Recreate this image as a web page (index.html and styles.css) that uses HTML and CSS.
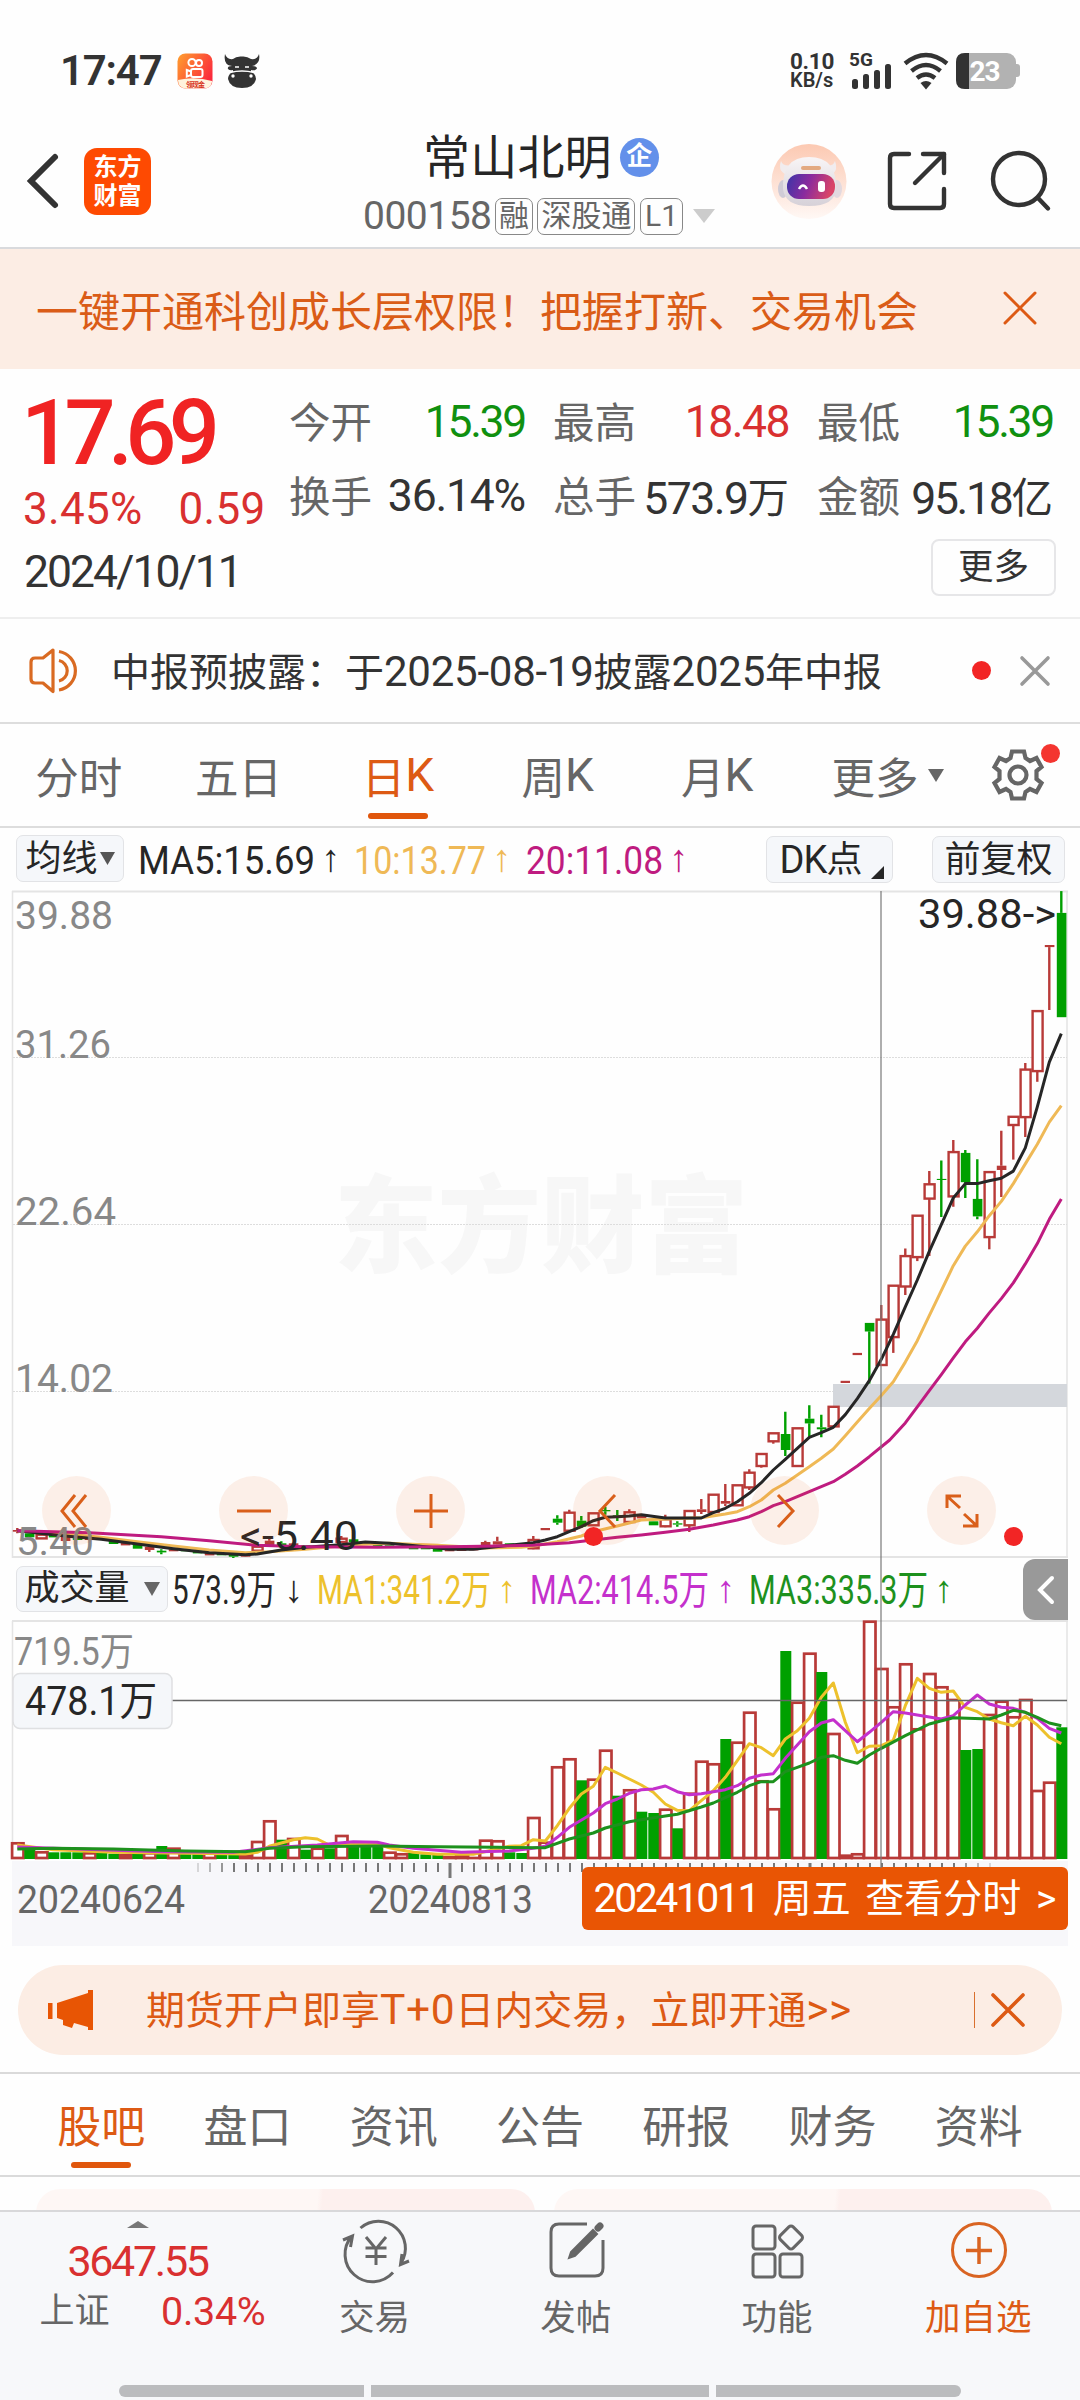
FILE: index.html
```html
<!DOCTYPE html>
<html lang="zh-CN">
<head>
<meta charset="utf-8">
<title>常山北明 000158</title>
<link rel="stylesheet" href="styles.css">
</head>
<body>
<div class="app">
  <div class="status">
    <span class="time">17:47</span>
    <svg class="app-badge" width="36" height="36" viewBox="0 0 36 36">
      <defs><linearGradient id="ks" x1="0" y1="0" x2="1" y2="0.6"><stop offset="0" stop-color="#ffa02e"/><stop offset="1" stop-color="#fb2a3c"/></linearGradient></defs>
      <rect x="0.5" y="0.5" width="35" height="35" rx="8" fill="url(#ks)"/>
      <path d="M1 27 Q18 23 35 28 V29 Q34 35.500 27 35.500 H9 Q1 35 1 27Z" fill="#fff3dd"/>
      <g fill="none" stroke="#fff" stroke-width="2"><circle cx="15" cy="9.500" r="3.600"/><circle cx="22" cy="10" r="3"/><rect x="14" y="16" width="11.500" height="8" rx="2"/><path d="M14 18.500 L9.800 17 V23.500 L14 22"/></g>
      <text x="9" y="34" font-size="7" font-weight="700" fill="#d8321c" textLength="19">领现金</text>
    </svg>
    <svg class="bull" width="36" height="36" viewBox="0 0 36 36" fill="#333">
      <path d="M1 1 Q-1 12 8 13 Q3 13 4 16 Q6 18 9 17 L9 20 H27 L27 17 Q31 18 33 15.500 Q33 13 28 13 Q37 11 35 1 Q33 7 27 6 Q23 3 18 3.500 Q12 3 9 6 Q3 7 1 1Z"/>
      <path d="M8 19 Q4 22 4 26 Q6 35 18 35 Q30 35 32 26 Q32 22 28 19Z"/>
      <path d="M6 19.500 Q18 16.500 30 19.500" fill="none" stroke="#fff" stroke-width="1.500"/><path d="M11 14 H15 M21 14 H25" stroke="#fff" stroke-width="1.500"/>
      <circle cx="9" cy="23" r="1.700" fill="#fff"/><circle cx="27" cy="23" r="1.700" fill="#fff"/>
    </svg>
    <span class="net"><b>0.10</b><b class="unit">KB/s</b></span>
    <svg class="signal" width="46" height="40" viewBox="0 0 46 40">
      <text x="0" y="15" font-size="19" font-weight="700" fill="#333" textLength="24">5G</text>
      <g fill="#333"><rect x="3" y="28" width="6" height="10" rx="2.500"/><rect x="14" y="23" width="6" height="15" rx="2.500"/><rect x="25" y="19" width="6" height="19" rx="2.500"/><rect x="36" y="13" width="6" height="25" rx="2.500"/></g>
    </svg>
    <svg class="wifi" width="46" height="38" viewBox="0 0 46 38" fill="none" stroke="#333" stroke-width="4.400">
      <path d="M2 11.500 Q23 -5.500 44 11.500"/><path d="M8.500 19 Q23 7 37.500 19"/><path d="M14 26 Q23 19 32 26"/><path d="M17.500 31 Q23 27 28.500 31 L23 37.500Z" fill="#333" stroke="none"/>
    </svg>
    <svg class="battery" width="64" height="38" viewBox="0 0 64 38">
      <rect x="0" y="1" width="60" height="36" rx="9" fill="#b2b2b2"/><path d="M60 12 h1 q3 0 3 3 v7 q0 3 -3 3 h-1Z" fill="#b2b2b2"/>
      <path d="M13 1 H9 Q0 1 0 10 V28 Q0 37 9 37 H13Z" fill="#333"/>
      <text x="13.500" y="29" font-size="28" font-weight="700" fill="#fff" textLength="31">23</text>
    </svg>
  </div>

  <header class="header">
    <svg class="back" width="36" height="60" viewBox="0 0 36 60" fill="none" stroke="#333" stroke-width="6" stroke-linecap="round" stroke-linejoin="miter"><path d="M29 6 L5 30 L29 54"/></svg>
    <div class="brand"><span>东方</span><span>财富</span></div>
    <div class="title">
      <div class="name">常山北明<span class="corp">企</span></div>
      <div class="code"><span>000158</span><i>融</i><i>深股通</i><i>L1</i><svg width="22" height="16" viewBox="0 0 22 16"><path d="M0 1 H22 L11 15Z" fill="#ccc"/></svg></div>
    </div>
    <svg class="robot" width="76" height="78" viewBox="0 0 76 78">
      <defs>
        <linearGradient id="halo" x1="0" y1="0" x2="0" y2="1"><stop offset="0" stop-color="#fcc9b2"/><stop offset="1" stop-color="#fff8f5"/></linearGradient>
        <linearGradient id="shell" x1="0" y1="0" x2="0" y2="1"><stop offset="0" stop-color="#f8f5f6"/><stop offset="1" stop-color="#d6d1d8"/></linearGradient>
        <linearGradient id="visor" x1="0" y1="0" x2="1" y2="0.2"><stop offset="0" stop-color="#3a35a8"/><stop offset="0.5" stop-color="#8a2a9e"/><stop offset="1" stop-color="#d94468"/></linearGradient>
      </defs>
      <circle cx="38" cy="38.500" r="37.500" fill="url(#halo)"/>
      <path d="M10 18 Q6 30 18 32 L22 22 Q12 24 10 18Z M64 18 Q68 30 58 32 L54 22 Q62 24 64 18Z" fill="#f1ecee"/>
      <ellipse cx="12" cy="46" rx="5" ry="9" fill="#cfcbd6"/><ellipse cx="66" cy="46" rx="5" ry="9" fill="#e2d9df"/>
      <path d="M12 46 Q11 14 38 14 Q66 14 65 46 Q64 63 38 63 Q14 63 12 46Z" fill="url(#shell)"/>
      <rect x="30" y="23" width="20" height="4" rx="2" fill="#e3a980"/>
      <rect x="16" y="31" width="48" height="25" rx="12" fill="url(#visor)"/>
      <path d="M28 46 Q32 39 36 46" fill="none" stroke="#fff" stroke-width="2.500"/><rect x="47" y="38" width="7" height="11" rx="3" fill="#fff"/>
    </svg>
    <svg class="share" width="62" height="62" viewBox="0 0 62 62" fill="none" stroke="#333" stroke-width="4.400" stroke-linecap="round" stroke-linejoin="round"><path d="M23 4 H8 Q4 4 4 8 V54 Q4 58 8 58 H54 Q58 58 58 54 V39"/><path d="M37 4 H58 V23"/><path d="M58 4 L29 33"/></svg>
    <svg class="search" width="62" height="64" viewBox="0 0 62 64" fill="none" stroke="#333" stroke-width="4.400" stroke-linecap="round"><circle cx="29" cy="29" r="26"/><path d="M48 48 L58 58.500"/></svg>
  </header>

  <div class="promo">
    <span>一键开通科创成长层权限！把握打新、交易机会</span>
    <svg width="34" height="34" viewBox="0 0 34 34" stroke="#dd5a14" stroke-width="3" stroke-linecap="round"><path d="M2 2 L32 32 M32 2 L2 32"/></svg>
  </div>

  <section class="quote">
    <div class="last">
      <div class="price">17.69</div>
      <div class="change"><span>3.45%</span><span>0.59</span></div>
      <div class="date">2024/10/11</div>
    </div>
    <div class="stats">
      <div class="stat"><span>今开</span><b class="down">15.39</b></div>
      <div class="stat"><span>最高</span><b class="up">18.48</b></div>
      <div class="stat"><span>最低</span><b class="down">15.39</b></div>
      <div class="stat"><span>换手</span><b class="pct">36.14%</b></div>
      <div class="stat"><span>总手</span><b>573.9<em>万</em></b></div>
      <div class="stat"><span>金额</span><b class="tight">95.18<em>亿</em></b></div>
      <button class="more">更多</button>
    </div>
  </section>

  <div class="notice">
    <svg class="horn" width="52" height="46" viewBox="0 0 52 46" fill="none" stroke="#d96a22" stroke-width="3.200"><path d="M24 2 L14 10 H6 Q2 10 2 14 V31 Q2 35 6 35 H14 L24 43.500Z" stroke-linejoin="round"/><path d="M30 12.500 A10.500 10.500 0 0 1 30 33"/><path d="M30 3.500 A19.500 19.500 0 0 1 30 42"/></svg>
    <p>中报预披露：于<span>2025-08-19</span>披露<span>2025</span>年中报</p>
    <i class="dot"></i>
    <svg class="x" width="32" height="32" viewBox="0 0 32 32" stroke="#999" stroke-width="3.600" stroke-linecap="round"><path d="M3 3 L29 29 M29 3 L3 29"/></svg>
  </div>

  <nav class="periods">
    <span>分时</span><span>五日</span><span class="on">日<em>K</em></span><span>周<em>K</em></span><span>月<em>K</em></span>
    <span>更多<svg width="16" height="13" viewBox="0 0 16 13"><path d="M0 0 H16 L8 13Z" fill="#666"/></svg></span>
    <span class="gear"><svg width="54" height="54" viewBox="-27 -27 54 54" fill="none" stroke="#666" stroke-width="4.200"><path d="M-6 -23.500 H6 L7.500 -17 L12 -14 L18.500 -17 L23.500 -8 L18.500 -4 V4 L23.500 8 L18.500 17 L12 14 L7.500 17 L6 23.500 H-6 L-7.500 17 L-12 14 L-18.500 17 L-23.500 8 L-18.500 4 V-4 L-23.500 -8 L-18.500 -17 L-12 -14 L-7.500 -17Z"/><circle r="8.500"/></svg><i class="dot"></i></span>
  </nav>

  <section class="chart">
    <div class="ma-row">
      <button class="chip ma">均线<svg width="15" height="13" viewBox="0 0 15 13"><path d="M0 0 H15 L7.500 13Z" fill="#555"/></svg></button>
      <svg class="legend" width="570" height="62">
        <g font-size="38.500"><text x="3" y="46" textLength="177" lengthAdjust="spacingAndGlyphs" fill="#262626">MA5:15.69</text><text class="arrow" x="186" y="43" fill="#262626">↑</text>
        <text x="219" y="46" textLength="132" lengthAdjust="spacingAndGlyphs" fill="#efb956">10:13.77</text><text class="arrow" x="357" y="43" fill="#efb956">↑</text>
        <text x="391" y="46" textLength="137" lengthAdjust="spacingAndGlyphs" fill="#bf1b80">20:11.08</text><text class="arrow" x="534" y="43" fill="#bf1b80">↑</text></g>
      </svg>
      <button class="chip dk"><em>DK</em>点<svg width="13" height="13" viewBox="0 0 13 13"><path d="M13 0 V13 H0Z" fill="#262626"/></svg></button>
      <button class="chip adj">前复权</button>
    </div>

    <div class="price-panel">
      <svg id="price" width="1080" height="669" viewBox="0 0 1080 669"></svg>
      <button class="round r1"><svg width="30" height="34" viewBox="0 0 30 34"><path d="M16 1 L3 17 L16 33 M27 1 L14 17 L27 33"/></svg></button>
      <button class="round r2"><svg width="34" height="34" viewBox="0 0 34 34"><path d="M0 17 H34"/></svg></button>
      <button class="round r3"><svg width="34" height="34" viewBox="0 0 34 34"><path d="M0 17 H34 M17 0 V34"/></svg></button>
      <button class="round r4"><svg width="20" height="34" viewBox="0 0 20 34"><path d="M17 1 L2 17 L17 33"/></svg></button>
      <button class="round r5"><svg width="20" height="34" viewBox="0 0 20 34"><path d="M3 1 L18 17 L3 33"/></svg></button>
      <button class="round r6"><svg width="34" height="34" viewBox="0 0 34 34"><path d="M2 14 V2 H16 M3 3 L15 14 M32 20 V32 H18 M31 31 L19 20"/></svg></button>
      <i class="dot d1"></i><i class="dot d2"></i>
    </div>

    <div class="vol-row">
      <button class="chip vol">成交量<svg width="16" height="14" viewBox="0 0 16 14"><path d="M0 0 H16 L8 14Z" fill="#666"/></svg></button>
      <svg class="legend" width="850" height="60">
        <g font-size="40"><text x="4" y="45" textLength="104" lengthAdjust="spacingAndGlyphs" fill="#262626">573.9万</text><text class="arrow" x="116" y="43" fill="#262626">↓</text>
        <text x="149" y="45" textLength="174" lengthAdjust="spacingAndGlyphs" fill="#edc12c">MA1:341.2万</text><text class="arrow" x="329" y="43" fill="#edc12c">↑</text>
        <text x="362" y="45" textLength="179" lengthAdjust="spacingAndGlyphs" fill="#c430cc">MA2:414.5万</text><text class="arrow" x="548" y="43" fill="#c430cc">↑</text>
        <text x="581" y="45" textLength="179" lengthAdjust="spacingAndGlyphs" fill="#1d911d">MA3:335.3万</text><text class="arrow" x="766" y="43" fill="#1d911d">↑</text></g>
      </svg>
      <button class="fold"><svg width="18" height="30" viewBox="0 0 18 30" fill="none" stroke="#fff" stroke-width="4" stroke-linecap="round"><path d="M15 3 L3 15 L15 27"/></svg></button>
    </div>

    <svg id="volume" width="1080" height="240" viewBox="0 0 1080 240"></svg>
    <div class="axis">
      <svg id="ticks" width="1056" height="20" viewBox="12 0 1056 20"></svg>
      <svg class="dates" width="560" height="50"><g font-size="39" fill="#666"><text x="5" y="31" textLength="168" lengthAdjust="spacingAndGlyphs">20240624</text><text x="356" y="31" textLength="165" lengthAdjust="spacingAndGlyphs">20240813</text></g></svg>
      <button class="goto"><b>20241011</b> 周五 查看分时 &gt;</button>
    </div>
    <div class="crosshair"></div>
  </section>

  <div class="ad">
    <svg class="mega" width="48" height="42" viewBox="0 0 48 42" fill="#e85504"><rect x="1" y="14" width="4.500" height="16"/><path d="M10 14 L41 4 V1 H46 V41 H41 V38 L27 34 L25 39 L16 36 V31 L10 29Z"/></svg>
    <span>期货开户即享<em>T+0</em>日内交易，立即开通<em>&gt;&gt;</em></span>
    <i></i>
    <svg class="x" width="34" height="34" viewBox="0 0 34 34" stroke="#dd5a14" stroke-width="3.600" stroke-linecap="round"><path d="M2 2 L32 32 M32 2 L2 32"/></svg>
  </div>

  <nav class="sections"><span class="on">股吧</span><span>盘口</span><span>资讯</span><span>公告</span><span>研报</span><span>财务</span><span>资料</span></nav>
  <div class="cards"><div></div><div></div></div>

  <footer class="dock">
    <div class="index">
      <svg width="22" height="7" viewBox="0 0 22 7"><path d="M0 7 L11 0 L22 7Z" fill="#777"/></svg>
      <div class="pts">3647.55</div>
      <div class="row"><span>上证</span><b>0.34%</b></div>
    </div>
    <div class="item"><svg width="68" height="60" viewBox="-34 -30 68 60" fill="none" stroke="#666" stroke-width="3"><path d="M-15.500 -22 A27 27 0 0 1 25 13 M33 11 L24.500 14.500 L26 4"/><path d="M17 22.500 A27 27 0 0 1 -24 -14 M-33 -10 L-23.500 -14 L-25.500 -3"/><path d="M-10 -13 L0 -1 L10 -13 M-10.500 -2 H10.500 M-10.500 6.500 H10.500 M0 -1 V15"/></svg><span>交易</span></div>
    <div class="item"><svg width="56" height="60" viewBox="0 0 56 60" fill="none" stroke="#666" stroke-width="3"><path d="M38 4 H10 Q2 4 2 12 V48 Q2 56 10 56 H46 Q54 56 54 48 V20"/><path d="M20 38 L22 32 L44 10 L48 14 L26 36Z" fill="#666" stroke-width="2"/><path d="M49 8 L51 6" stroke-width="7" stroke-linecap="round"/></svg><span>发帖</span></div>
    <div class="item"><svg width="56" height="60" viewBox="0 0 56 60" fill="none" stroke="#666" stroke-width="3"><rect x="3" y="6" width="22" height="23" rx="3"/><rect x="3" y="34" width="22" height="23" rx="3"/><rect x="30" y="34" width="22" height="23" rx="3"/><rect x="32" y="8.500" width="18" height="18" rx="3" transform="rotate(45 41 17.500)"/></svg><span>功能</span></div>
    <div class="item on"><svg width="60" height="60" viewBox="-30 -30 60 60" fill="none" stroke="#d96422" stroke-width="3"><circle r="26.500"/><path d="M-13 0.500 H13 M0 -13 V14" stroke-width="3.500"/></svg><span>加自选</span></div>
  </footer>
  <div class="gesture"><i></i><i></i><i></i></div>
</div>
<script src="chart.js"></script>
</body>
</html>
```
FILE: chart.js
```js
// Horizontal position of the trading day with index i.
const X = i => 17.3 + 12 * i;
const RED = '#b83a38', GREEN = '#00a000';
const r1 = n => Math.round(n * 10) / 10;

// Vertical scales: the flat early stretch, the middle stretch, the steep late stretch.
const early = v => v / 3 + 550;
const middle = v => v / 3 + 260;
const late = v => v / 2.8 - 10;

// [index, kind, bodyTop, bodyBottom, high, low]; h hollow, s solid rise, g fall, d dash.
const candles = [
  [early, [
    [0,'s',270,275,264,280],[1,'g',280,292],[2,'h',284,295],[3,'g',284,292],[4,'s',288,303],[5,'g',288,300],[6,'s',290,300],[7,'g',294,300],
    [8,'g',300,312],[9,'s',308,316],[10,'g',312,326],[11,'s',320,330,318,336],[12,'g',332,337,328,343],[13,'s',328,334],[14,'g',328,334],
    [15,'g',332,340],[16,'s',338,346],[17,'g',340,346],[18,'g',345,350,340,354],[19,'s',344,350],[20,'h',320,332],[21,'s',302,318,292,320],
    [22,'g',310,318,304,320],[23,'s',310,320],[24,'g',316,322],[25,'g',318,322],[26,'s',312,318],[27,'h',296,306,288,308],[28,'g',298,306,294,308],
    [29,'g',306,312],[30,'g',313,319],[31,'g',316,320],[32,'s',318,322],[33,'g',322,328],[34,'g',322,328],[35,'g',326,335],[36,'s',330,334],
    [37,'s',330,333],[38,'s',326,331],[39,'s',306,316,302,318],[40,'s',304,314,290,318],[41,'g',310,315],[42,'s',312,316],[43,'h',300,325,288,328]]],
  [middle, [
    [44,'d',1137],[45,'g',1106,1118,1096,1124],[46,'h',1088,1142,1079,1144],[47,'g',1112,1130,1098,1134],[48,'h',1090,1126],[49,'g',1080,1084,1070,1094],
    [50,'g',1096,1102,1080,1113],[51,'h',1087,1116,1078,1118],[52,'s',1097,1105],[53,'g',1114,1126],[54,'h',1108,1129,1094,1132],[55,'g',1120,1124,1114,1130],
    [56,'h',1083,1126,1083,1146],[57,'s',1078,1086,1047,1092],[58,'h',1034,1086],[59,'s',1053,1061,1002,1068],[60,'h',1006,1066],[61,'h',968,1012,958,1020],
    [62,'h',912,948,912,953],[63,'h',850,874,850,881],[64,'g',852,900,785,918],[65,'h',835,948],[66,'g',806,820,766,860],[67,'g',832,838,794,862]]],
  [late, [
    [68,'h',1475,1530],[69,'d',1405],[70,'d',1327],[71,'g',1240,1264,1240,1410],[72,'h',1231,1358,1190,1360],[73,'h',1136,1280,1136,1324],
    [74,'h',1053,1138,1032,1162],[75,'h',940,1056,940,1067],[76,'h',852,892,815,1053],[77,'g',837,840,785,944],[78,'h',762,886,728,915],
    [79,'g',764,846,756,890],[80,'g',893,942,782,950],[81,'h',818,1000,818,1034],[82,'s',800,812,702,888],[83,'h',663,686,663,783],
    [84,'h',531,664,512,720],[85,'h',367,535,367,565],[86,'s',182,188,182,364],[87,'g',92,384,31,384]]]
];

const averages = {
  '#efb956': [
    [early, [[0,272],[4,282],[7,292],[10,305],[13,318],[16,330],[19,338],[21,335],[24,328],[28,314],[31,310],[35,316],[39,324],[42,322]]],
    [middle, [[43,1188],[45,1175],[47,1158],[48,1145],[50,1128],[52,1110],[54,1107],[57,1103],[59,1092],[60,1085],[61,1070],[62,1050],[63,1020],[64,1000],[65,975],[66,950],[67,925],[68,897]]],
    [late, [[69,1556],[70,1518],[71,1480],[72,1443],[73,1405],[74,1350],[75,1290],[76,1220],[77,1150],[78,1080],[79,1025],[80,985],[81,940],[82,900],[83,850],[84,795],[85,740],[86,678],[87,632]]]],
  '#262626': [
    [early, [[0,272],[4,288],[7,298],[10,312],[13,326],[16,338],[19,344],[20,342],[22,330],[24,322],[27,314],[29,306],[31,310],[34,320],[36,328],[38,328],[41,316],[43,308]]],
    [middle, [[44,1170],[45,1160],[46,1145],[47,1130],[48,1112],[49,1102],[50,1100],[51,1098],[52,1094],[54,1104],[57,1104],[58,1088],[59,1075],[60,1055],[61,1030],[62,998],[63,960],[64,928],[65,895],[66,862],[67,848],[68,832]]],
    [late, [[69,1497],[70,1452],[71,1402],[72,1342],[73,1272],[74,1195],[75,1120],[76,1040],[77,965],[78,890],[79,850],[80,850],[81,842],[82,835],[83,815],[84,750],[85,635],[86,510],[87,430]]]],
  '#bf1b80': [
    [early, [[0,272],[6,278],[12,290],[16,302],[20,316],[24,320],[30,322],[36,320],[40,318],[43,316]]],
    [middle, [[44,1183],[46,1178],[48,1170],[50,1162],[52,1155],[54,1147],[56,1138],[58,1125],[60,1110],[61,1100],[62,1085],[63,1067],[64,1055],[65,1040],[66,1025],[67,1010],[68,995],[69,973],[70,948],[71,920]]],
    [late, [[72.7,1568],[74,1520],[75,1475],[76,1430],[77,1385],[78,1338],[79,1293],[80,1255],[81,1212],[82,1172],[83,1128],[84,1075],[85,1018],[86,950],[87,893]]]]
};

const line = (pts, color, w) => `<polyline fill="none" stroke="${color}" stroke-width="${w}" stroke-linejoin="round" points="${pts.map(p => r1(p[0]) + ',' + r1(p[1])).join(' ')}"/>`;
const label = (x, y, w, t, c, s) => `<text x="${x}" y="${y}" textLength="${w}" lengthAdjust="spacingAndGlyphs" font-size="${s}" fill="${c}">${t}</text>`;

let p = '<text class="mark" x="334" y="374" textLength="414" lengthAdjust="spacingAndGlyphs">东方财富</text>';
p += '<path d="M12 1.500 H1068 M12 667 H1068" stroke="#e4e4e4" stroke-width="2"/><path d="M12.500 1 V668 M1067 1 V668" stroke="#e4e4e4" stroke-width="1.500"/>';
p += '<path d="M13 167.500 H1067 M13 334.500 H1067 M13 501.500 H1067" stroke="#ddd" stroke-width="1" stroke-dasharray="2 1"/>';
p += '<rect x="833" y="494" width="234" height="23" fill="#d4d7dc"/>';
for (const [y, list] of candles) for (const [i, kind, a, b, hi, lo] of list) {
  const x = X(i), c = kind === 'g' ? GREEN : RED;
  if (kind === 'd') { p += `<rect x="${r1(x - 4.7)}" y="${r1(y(a) - 1)}" width="9.400" height="2.200" fill="${c}"/>`; continue; }
  const t = y(a), m = Math.max(y(b), t + 1);
  if (hi !== undefined) p += `<path d="M${r1(x)} ${r1(y(hi))} V${r1(t)} M${r1(x)} ${r1(m)} V${r1(y(lo))}" stroke="${c}" stroke-width="2.400"/>`;
  if (kind === 'h') p += `<rect x="${r1(x - 4.7)}" y="${r1(t)}" width="10" height="${r1(m - t)}" fill="#fff" stroke="${c}" stroke-width="2.400"/>`;
  else p += `<rect x="${r1(x - 4.5)}" y="${r1(t)}" width="9.600" height="${r1(m - t)}" fill="${c}"/>`;
}
for (const [c, parts] of Object.entries(averages)) p += line(parts.flatMap(([y, pts]) => pts.map(([i, v]) => [X(i), y(v)])), c, 3);
p += label(15, 39, 98, '39.88', '#888', 39) + label(15, 168, 96, '31.26', '#888', 39) + label(15, 335, 101, '22.64', '#888', 39) + label(15, 502, 98, '14.02', '#888', 39) + label(16, 665, 78, '5.40', '#888', 39);
p += label(240, 660, 118, '&lt;-5.40', '#262626', 40) + label(918, 38, 138, '39.88-&gt;', '#262626', 40);
document.getElementById('price').innerHTML = p;

// Volume bars: r rise (hollow), g fall (filled), then the bar's top.
const volume = 'r1210 g1230 r1237 g1240 g1240 g1240 r1240 g1242 g1244 r1246 g1243 r1240 g1221 r1226 g1243 g1243 r1240 g1245 g1245 r1247 r1206 r1144 g1202 r1197 g1232 r1226 g1228 r1188 g1215 g1220 g1222 r1238 r1243 g1242 g1246 g1248 r1252 r1248 r1237 r1202 r1204 g1240 g1242 r1134 r1208 r982 r958 g1024 r1019 r932 g1070 r1051 g1118 g1122 r1109 g1168 r1061 r965 r973 g900 r908 r818 r1024 r1108 g636 r788 r641 g699 r882 r1247 r1243 r545 r687 r802 r673 r868 r702 r742 r780 g933 g930 r825 r785 r832 r780 r1053 r1028 g865'.split(' ');
const V = v => v / 3 - 181;
let q = '<path d="M12 1 H1068" stroke="#e4e4e4" stroke-width="2"/><path d="M12.500 1 V239 M1067 1 V239" stroke="#e4e4e4" stroke-width="1.500"/>';
volume.forEach((s, i) => {
  const t = V(+s.slice(1)), x = X(i);
  if (s[0] === 'g') q += `<rect x="${r1(x - 5)}" y="${r1(t)}" width="11" height="${r1(239 - t)}" fill="${GREEN}"/>`;
  else q += `<rect x="${r1(x - 5.2)}" y="${r1(t + 1)}" width="11.400" height="${r1(237 - t)}" fill="#fff" stroke="${RED}" stroke-width="2.700"/>`;
});
const volumeAverages = {
  '#edc12c': [[0,1218],[3,1232],[8,1240],[14,1243],[19,1245],[20,1240],[21,1222],[23,1202],[24,1196],[25,1200],[26,1218],[28,1216],[30,1215],[31,1226],[33,1240],[35,1246],[38,1246],[40,1230],[41,1222],[42,1220],[43,1202],[44,1206],[45,1160],[46,1108],[47,1065],[48,1042],[49,985],[50,1002],[51,1020],[52,1038],[53,1060],[54,1095],[55,1114],[56,1115],[57,1085],[58,1055],[59,1015],[60,965],[61,914],[62,926],[63,950],[64,900],[65,875],[66,838],[67,775],[68,732],[69,850],[70,941],[71,922],[72,920],[73,903],[74,800],[75,718],[76,748],[77,760],[78,756],[79,805],[80,818],[81,840],[82,851],[83,860],[84,832],[85,858],[86,895],[87,914]],
  '#c430cc': [[0,1224],[5,1230],[12,1238],[18,1240],[21,1226],[25,1218],[28,1208],[30,1210],[31,1218],[33,1228],[37,1240],[41,1236],[43,1228],[44,1222],[45,1195],[46,1165],[48,1122],[49,1094],[50,1080],[51,1063],[52,1052],[53,1050],[54,1041],[55,1058],[56,1067],[57,1064],[59,1052],[60,1040],[61,1018],[62,1008],[63,1004],[64,958],[66,878],[67,852],[68,842],[69,875],[70,908],[71,880],[72,850],[73,818],[74,822],[76,834],[77,840],[78,830],[79,798],[80,768],[81,795],[82,805],[83,808],[84,820],[85,838],[86,868],[87,882]],
  '#1d911d': [[0,1230],[3,1228],[8,1230],[14,1236],[19,1238],[21,1228],[24,1223],[30,1221],[35,1223],[40,1225],[44,1226],[46,1200],[48,1182],[49,1167],[51,1148],[52,1142],[54,1131],[55,1126],[57,1104],[58,1092],[59,1076],[60,1060],[61,1040],[62,1028],[63,1028],[64,998],[65,985],[66,972],[67,955],[68,950],[69,964],[70,973],[71,948],[72,928],[74,890],[76,855],[78,836],[81,840],[82,828],[83,814],[84,820],[85,835],[86,852],[87,860]]
};
for (const [c, pts] of Object.entries(volumeAverages)) q += line(pts.map(([i, v]) => [X(i), V(v)]), c, 3);
q += '<path d="M172 80.500 H1067" stroke="#666" stroke-width="1.300"/>';
q += label(14, 45, 120, '719.5万', '#888', 39);
q += '<rect x="13" y="53.500" width="159" height="55" rx="7" fill="#f5f7fa" stroke="#dfe0e2" stroke-width="1.500"/>' + label(25, 95, 132, '478.1万', '#262626', 40);
document.getElementById('volume').innerHTML = q;

let k = '';
for (let i = 15; i <= 81; i++) {
  const big = i === 36, o = Math.min(1, (i - 14) / 4, (82 - i) / 4);
  k += `<path d="M${r1(X(i) + 0.7)} ${2} V${big ? 17 : 11}" stroke="#777" stroke-width="${big || i === 66 ? 3 : 2}" opacity="${o}"/>`;
}
document.getElementById('ticks').innerHTML = k;
```
FILE: styles.css
```css
* { box-sizing: border-box; }
body { margin: 0; background: #fefefe; font-family: Roboto, "Noto Sans CJK SC", sans-serif; color: #333; }
svg { display: block; flex: none; overflow: visible; }
svg text { font-family: Roboto, "Noto Sans CJK SC", sans-serif; }
svg text.arrow { font-family: "Liberation Sans", sans-serif; font-size: 38px; }
svg text.mark { font-size: 106px; font-weight: 900; fill: #f7f7f7; font-family: "Noto Sans CJK SC", sans-serif; }
b, em, i { font-style: normal; font-weight: 400; }
button { border: 0; padding: 0; font: inherit; color: inherit; background: none; }
.app { width: 1080px; height: 2400px; overflow: hidden; display: flex; flex-direction: column; }
.app > * { flex: none; }
.dot { display: block; width: 19px; height: 19px; border-radius: 50%; background: #f22525; }

.status { height: 124px; padding: 17px 60px 0 60px; display: flex; align-items: center; }
.time { font-size: 42px; font-weight: 600; letter-spacing: -1.2px; width: 117px; white-space: nowrap; }
.bull { margin-left: 11px; }
.net { margin-left: auto; width: 59px; display: flex; flex-direction: column; line-height: 19px; }
.net b { font-size: 22.500px; font-weight: 700; letter-spacing: -0.300px; }
.net .unit { font-size: 20px; font-weight: 600; letter-spacing: 0; }
.wifi { margin-left: 8px; }
.battery { margin-left: 7px; }

.header { height: 125px; border-bottom: 2px solid #d9dadd; padding: 0 28px 0 26px; display: flex; position: relative; }
.back { margin-top: 27px; }
.brand { margin: 24px 0 0 22px; width: 67px; height: 67px; border-radius: 13px; background: #fe4a02; color: #fff; display: flex; flex-direction: column; justify-content: center; align-items: center; font-size: 24px; line-height: 29px; }
.brand span { font-weight: 700; }
.title { margin-left: 212px; width: 352px; }
.name { margin-left: 60px; height: 66px; display: flex; align-items: center; font-size: 47px; line-height: 66px; color: #262626; letter-spacing: 0.200px; padding-top: 1px; }
.corp { width: 39px; height: 39px; border-radius: 50%; background: #6390ea; color: #fff; font-size: 26px; line-height: 37px; text-align: center; font-weight: 700; margin-left: 8px; letter-spacing: 0; }
.code { height: 50px; display: flex; align-items: center; font-size: 39px; color: #666; line-height: 50px; padding-top: 2px; }
.code span { letter-spacing: -0.500px; width: 133px; }
.code i { height: 37px; line-height: 34px; border: 1.500px solid #888; border-radius: 7px; font-size: 30px; padding: 0 3px; margin-right: 4.500px; white-space: nowrap; }
.code i:nth-child(4) { padding: 0 4px; margin-right: 3px; }
.code svg { margin-left: 7px; }
.robot { margin: 19px 0 0 56px; }
.share { margin: 26px 0 0 39px; }
.search { margin: 26px 0 0 42px; }

.promo { height: 120px; background: #fcede4; color: #da5c17; padding: 0 43px 0 36px; display: flex; align-items: center; justify-content: space-between; font-size: 42px; }
.promo span { position: relative; top: -1px; }
.promo svg { position: relative; top: -1px; }

.quote { height: 250px; border-bottom: 2px solid #eee; display: flex; padding: 0 24px; }
.last { width: 265px; }
.price { margin: 16px 0 0 -3px; height: 98px; line-height: 98px; font-size: 90px; font-weight: 500; color: #f02323; letter-spacing: -7.700px; }
.change { display: flex; height: 52px; line-height: 52px; font-size: 44px; color: #d93030; letter-spacing: 0.300px; margin-left: -1px; }
.change span:last-child { margin-left: 36px; }
.date { font-size: 44.500px; line-height: 74px; letter-spacing: -2px; }
.stats { display: grid; grid-template-columns: repeat(3, 236px); column-gap: 28px; grid-template-rows: 75px 74px 55px; padding-top: 15px; row-gap: 0; width: 764px; }
.stat { display: flex; justify-content: space-between; align-items: center; white-space: nowrap; }
.stat span { font-size: 41.500px; color: #666; position: relative; top: -2px; }
.stat b { font-size: 44.500px; letter-spacing: -1.500px; }
.stat em { font-size: 41.500px; letter-spacing: 0; position: relative; top: -1px; }
.stat .pct { letter-spacing: -1.200px; }
.stat .down, .stat .tight { letter-spacing: -2.300px; }
.stat .down { color: #109010; }
.stat .up { color: #d93030; }
.more { grid-column: 3; justify-self: end; width: 125px; height: 57px; margin-top: 6px; border: 2px solid #e6e6e8; border-radius: 8px; font-size: 35.500px; line-height: 51px; margin-right: -3px; }

.notice { height: 105px; border-bottom: 2px solid #ddd; padding: 0 29px 0 29px; display: flex; align-items: center; }
.notice p { margin: -3px 0 0 30px; font-size: 39px; white-space: nowrap; }
.notice p span { font-size: 42px; letter-spacing: -0.250px; }
.notice .dot { margin-left: auto; }
.notice .x { margin-left: 28px; }

.periods { height: 104px; border-bottom: 2px solid #ddd; display: grid; grid-template-columns: repeat(5, 159.600px) 182px 77px; color: #666; font-size: 43.500px; }
.periods span { display: flex; align-items: center; justify-content: center; position: relative; padding-bottom: 0; left: -1px; }
.periods em { font-size: 46px; }
.periods span svg { margin-left: 10px; }
.periods .gear { left: 0; }
.periods .gear svg { margin: 0; }
.periods .gear .dot { position: absolute; right: -3px; top: 20px; background: #f43530; }
.periods .on, .sections .on { color: #dd5a14; }
.periods .on::after, .sections .on::after { content: ""; position: absolute; width: 60px; height: 6px; border-radius: 3px; background: #e0560c; bottom: 7px; left: 50%; margin-left: -30px; }

.chart { height: 1119px; position: relative; }
.ma-row { height: 62px; display: flex; padding: 7px 15px 0 16px; }
.chip { background: #f5f7fa; border: 1.500px solid #e2e3e6; border-radius: 7px; height: 47px; display: flex; align-items: center; justify-content: center; font-size: 36px; line-height: 42px; color: #262626; white-space: nowrap; }
.ma { width: 108px; }
.ma svg { margin-left: 2px; }
.legend { margin-top: -7px; }
.ma-row .legend { margin-left: 11px; }
.dk { width: 127px; margin-left: 61px; margin-top: 1px; }
.dk em { font-size: 38px; letter-spacing: -1px; }
.dk svg { margin: 26px -5px 0 9px; }
.adj { width: 133px; margin-left: auto; margin-top: 1px; }
.price-panel { height: 669px; position: relative; }
.round { position: absolute; top: 586px; width: 69px; height: 69px; border-radius: 50%; background: rgba(236, 94, 16, 0.090); display: flex; align-items: center; justify-content: center; }
.round svg { fill: none; stroke: #d95f1a; stroke-width: 3; }
.r1 { left: 42px; } .r1 svg { margin-right: 6px; }
.r2 { left: 219px; } .r3 { left: 396px; } .r4 { left: 573px; } .r5 { left: 750px; } .r6 { left: 927px; }
.d1, .d2 { position: absolute; top: 637px; }
.d1 { left: 584px; } .d2 { left: 1004px; }
.vol-row { height: 61px; padding: 7px 12px 0 16px; display: flex; }
.vol { width: 152px; font-size: 35px; height: 46px; }
.vol svg { margin-left: 14px; }
.vol-row .legend { margin-top: -7px; }
.fold { width: 45px; height: 61px; margin: -7px 0 0 5px; background: #999; border-radius: 12px 0 0 12px; display: flex; align-items: center; justify-content: center; }
.axis { height: 85px; margin: 1px 12px 0; background: #f7f7fa; position: relative; }
.axis .dates { margin-top: 1px; }
.goto { position: absolute; right: 0; top: 6px; width: 486px; height: 63px; border-radius: 6px; background: #e95504; color: #fff; font-size: 39px; line-height: 62px; white-space: pre; word-spacing: 5px; }
.goto b { font-size: 41px; letter-spacing: -2.500px; }
.crosshair { position: absolute; left: 880px; top: 63px; width: 2px; height: 977px; background: rgba(120, 120, 120, 0.600); }

.ad { height: 90px; margin: 18px 18px 17px; border-radius: 45px; background: #fcede4; color: #dd5a14; display: flex; align-items: center; padding: 0 37px 0 29px; font-size: 39px; white-space: nowrap; }
.ad span { margin-left: 51px; position: relative; top: -3px; }
.ad em { font-size: 42.500px; letter-spacing: 0.600px; }
.ad i { margin-left: auto; width: 1.500px; height: 36px; background: #d9702e; }
.ad .x { margin-left: 16px; }

.sections { height: 105px; border-top: 2px solid #dadada; border-bottom: 2px solid #dadada; padding: 0 28px; display: grid; grid-template-columns: repeat(7, 1fr); font-size: 44px; color: #666; }
.sections span { display: flex; align-items: center; justify-content: center; position: relative; padding-bottom: 2px; }
.sections .on::after { bottom: 7px; }
.cards { height: 33px; padding: 12px 28px 0 36px; display: flex; gap: 19px; overflow: hidden; }
.cards div { flex: 1; height: 60px; border-radius: 24px; background: linear-gradient(95deg, #fef7f5 0 56%, #fdf0ee 57%); }

.dock { height: 175px; background: #f7f8fa; border-top: 2px solid #d8d8da; display: grid; grid-template-columns: 275px repeat(4, 201.250px); }
.index { display: flex; flex-direction: column; align-items: center; padding-top: 9px; color: #d93030; }
.pts { font-size: 43px; line-height: 50px; margin-top: 8px; letter-spacing: -2.300px; }
.index .row { width: 226px; display: flex; justify-content: space-between; align-items: center; line-height: 52px; margin-left: 30px; }
.row span { color: #666; font-size: 35px; }
.row b { font-size: 39.500px; letter-spacing: -0.300px; }
.item { display: flex; flex-direction: column; align-items: center; padding-top: 8px; color: #666; font-size: 35.500px; line-height: 50px; }
.item span { margin-top: 13px; position: relative; left: -1px; }
.item.on { color: #dd5a14; }
.gesture { height: 15px; padding: 0 119px; display: flex; gap: 7px; background: #f7f8fa; }
.gesture i { height: 12px; flex: 245 0 0; background: #bbbcbe; }
.gesture i:nth-child(2) { flex-grow: 338; }
.gesture i:first-child { border-radius: 6px 0 0 6px; }
.gesture i:last-child { border-radius: 0 6px 6px 0; }
```
